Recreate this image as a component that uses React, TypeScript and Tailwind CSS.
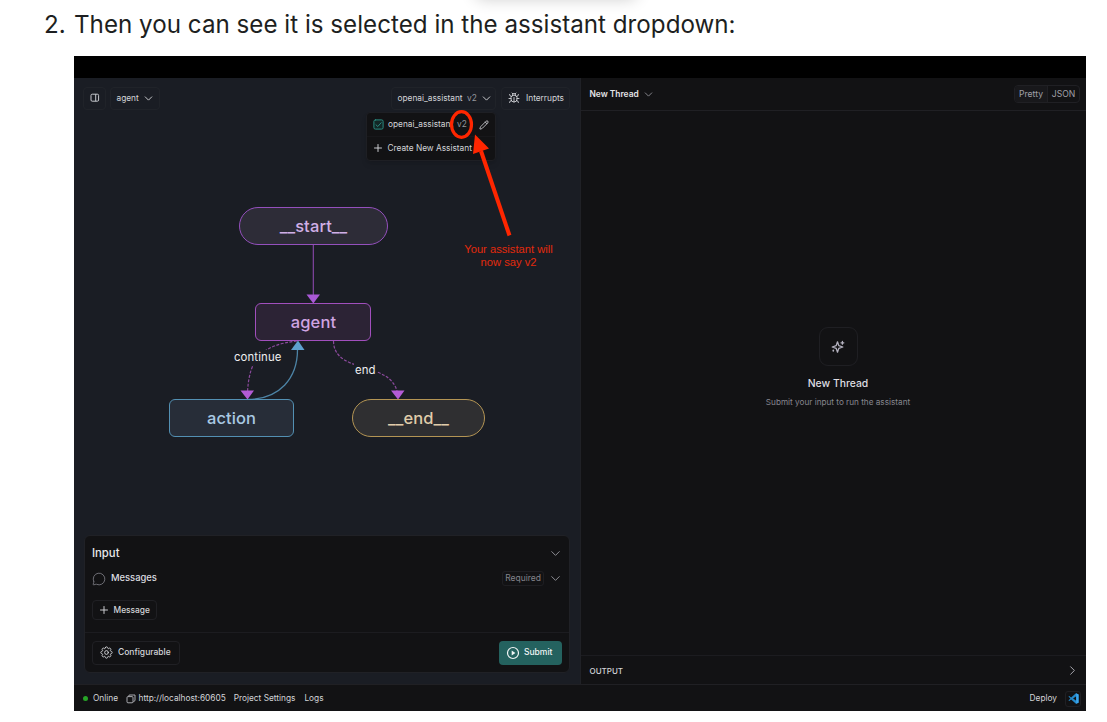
import React from "react";
import { Bug, ChevronDown, ChevronRight, MessageCircle, Pencil, Plus } from "lucide-react";
import { HiOutlineCog8Tooth } from "react-icons/hi2";

const btn = "flex shrink-0 items-center rounded-[4px] border border-[#202329]";

function PanelIcon() {
  return (
    <svg width="10" height="10" viewBox="0 0 10 10" fill="none" stroke="#c6c8cd" strokeWidth="1">
      <rect x="1" y="1.2" width="7.6" height="7" rx="1.2" />
      <path d="M5.7 1.2v7" />
    </svg>
  );
}

function CheckIcon() {
  return (
    <svg className="shrink-0" width="11" height="11" viewBox="0 0 11 11" fill="none" stroke="#2b8a80" strokeWidth="1" strokeLinecap="round" strokeLinejoin="round">
      <rect x="0.900" y="0.900" width="9.200" height="9.200" rx="1.500" fill="#122625" />
      <path d="M3 5.800 4.800 7.500 8.200 3.700" />
    </svg>
  );
}

function PlayIcon() {
  return (
    <svg width="14" height="14" viewBox="0 0 14 14" fill="none">
      <circle cx="7" cy="7" r="5.500" stroke="#f1f5f5" strokeWidth="1.200" />
      <path d="M5.700 4.600v4.800L9.400 7Z" fill="#f1f5f5" />
    </svg>
  );
}

function CopyIcon() {
  return (
    <svg width="10" height="10" viewBox="0 0 10 10" fill="none" stroke="#b9babf" strokeWidth="0.9">
      <rect x="1" y="2.6" width="6" height="6.2" rx="1" />
      <path d="M2.600 2.400 3.200 1H9v5.600L7.300 7.800" />
    </svg>
  );
}

function SparkleIcon() {
  return (
    <svg width="16" height="16" viewBox="0 0 16 16" fill="none" stroke="#b4b2bf" strokeWidth="1.3" strokeLinejoin="round" strokeLinecap="round">
      <path d="M7.5 2.8 8.8 6.6 12.8 8 8.8 9.4 7.5 13.2 6.2 9.4 2.2 8 6.2 6.6Z" />
      <path d="M12.4 2.4v2.8M11 3.8h2.8" />
      <path d="M3.3 11.3v.5" strokeWidth="1.7" />
    </svg>
  );
}

function VSCodeIcon() {
  return (
    <svg width="11" height="11" viewBox="0 0 24 24">
      <path fill="#2489ca" d="M17.3.4 6.8 10 2.6 6.8 1 7.7l4.200 4.300L1 16.300l1.6.9L6.8 14l10.5 9.6L23 21V3ZM18 7v10l-6.9-5Z" />
      <path fill="#3ba6ee" d="M17.3.4 23 3v18l-5.7 2.6.7-2.2V2.5Z" />
    </svg>
  );
}

function Graph() {
  const node = "absolute flex h-[38px] items-center justify-center border text-[16.500px] font-medium";
  return (
    <div className="absolute inset-0 tracking-[0.1px]">
      <svg className="absolute inset-0" width="506" height="460" viewBox="74 78 506 460" fill="none">
        <path d="M313.300 244v52" stroke="#8b49ad" strokeWidth="1.1" />
        <path d="M306.500 294.500h13.500l-6.700 9z" fill="#a959d6" />
        <path d="M297 341C264 345 249 356 247.500 393" stroke="#8c4a9d" strokeWidth="1.200" strokeDasharray="3 1.500" />
        <path d="M333.500 341C334 375 391 360 397.500 393" stroke="#8c4a9d" strokeWidth="1.200" strokeDasharray="3 1.500" />
        <path d="M248 399.500C279 399 298 379 297.500 348" stroke="#4d84a6" strokeWidth="1.300" />
        <path d="M240.500 390.500h13.500l-6.500 9zM391 390.500h13.500l-6.500 9z" fill="#b35bd5" />
      </svg>
      <div className={node + " left-[165px] top-[129px] w-[149px] rounded-full border-[#9450bd] bg-[#2d2c37] text-[#d0afe6]"}>__start__</div>
      <div className={node + " left-[181px] top-[225px] w-[116px] rounded-[6px] border-[#a14fbd] bg-[#2c2335] pl-[1px] text-[#d0a4e2]"}>agent</div>
      <div className={node + " left-[95px] top-[321px] w-[125px] rounded-[6px] border-[#5390b3] bg-[#272d38] pt-[1px] text-[#a9c9e3]"}>action</div>
      <div className={node + " left-[278px] top-[321px] w-[133px] rounded-full border-[#b49554] bg-[#2f2f31] pt-[1px] text-[#e0cdaa]"}>__end__</div>
      <svg className="absolute inset-0" width="506" height="460" viewBox="74 78 506 460">
        <path d="M291 350h13.500l-6.500-9.500z" fill="#5ea1ce" />
      </svg>
      <div className="absolute left-[158px] top-[272px] bg-[#1a1d24] px-[2px] text-[11.400px] leading-[15px] text-[#eeeef0]">continue</div>
      <div className="absolute left-[280px] top-[285px] bg-[#1a1d24] px-[1px] text-[11.400px] leading-[15px] text-[#eeeef0]">end</div>
    </div>
  );
}

function AssistantMenu() {
  return (
    <div className="absolute right-0 top-[25px] z-10 h-[49px] w-[130px] rounded-[4px] border border-[#1e1f24] bg-[#121214] shadow-md">
      <div className="flex h-[24px] items-center border-b border-[#17171a] pl-[6px] pr-[6px] pt-px">
        <CheckIcon />
        <span className="ml-[4px] w-[65px] shrink-0 whitespace-nowrap">openai_assistant</span>
        <span className="ml-[4px] text-[#96979d]">v2</span>
        <Pencil className="ml-auto" size={10} strokeWidth={2} />
      </div>
      <div className="flex h-[23px] items-center pl-[5px]">
        <Plus size={12} strokeWidth={1.900} />
        <span className="ml-[3.500px] whitespace-nowrap pt-px">Create New Assistant</span>
      </div>
    </div>
  );
}

function InputCard() {
  return (
    <section className="relative mx-[10px] mb-[11px] flex h-[138px] flex-col rounded-[6px] border border-[#202126] bg-[#121214] font-medium">
      <div className="flex h-[33px] items-center justify-between pl-[7px] pr-[6px] pt-px text-[11.300px] text-[#e8e8ea]">
        Input
        <ChevronDown size={15} strokeWidth={1.500} color="#94949b" />
      </div>
      <div className="flex h-[19px] items-center pl-[7px] pr-[6px]">
        <MessageCircle size={14} strokeWidth={1.500} color="#797981" />
        <span className="ml-[5px] text-[9.400px] text-[#dedee1]">Messages</span>
        <span className="ml-auto flex h-[15px] items-center rounded-[3px] border border-[#1e1e22] px-[2px] text-[8.500px] font-normal text-[#84848c]">Required</span>
        <ChevronDown className="ml-[4px]" size={15} strokeWidth={1.500} color="#94949b" />
      </div>
      <div className="h-[45px] border-b border-[#1c1c20] pl-[7px] pt-[12px]">
        <button className="flex h-[20px] w-[65px] items-center rounded-[4px] border border-[#202024] pl-[5px] text-[8.400px]">
          <Plus size={12} strokeWidth={1.900} />
          <span className="ml-[3.500px]">Message</span>
        </button>
      </div>
      <div className="flex flex-1 items-center justify-between pl-[7px] pr-[7px]">
        <button className="flex h-[24px] w-[88px] items-center rounded-[4px] border border-[#202024] pl-[6px] text-[8.500px]">
          <HiOutlineCog8Tooth size={15} />
          <span className="ml-[4px]">Configurable</span>
        </button>
        <button className="flex h-[24px] w-[63px] items-center rounded-[4px] bg-[#24625f] pl-[7px] text-[8.500px] text-[#f1f5f5]">
          <PlayIcon />
          <span className="ml-[4px]">Submit</span>
        </button>
      </div>
    </section>
  );
}

function GraphPanel() {
  return (
    <div className="relative flex w-[506px] flex-col justify-between bg-[#1a1d24]">
      <Graph />
      <header className="relative flex h-[40px] items-center pl-[9px] pr-[10px]">
        <button className={btn + " h-[23px] w-[23px] justify-center"}><PanelIcon /></button>
        <button className={btn + " ml-[4px] h-[23px] w-[50px] pl-[5.500px]"}>
          <span className="pt-px">agent</span>
          <ChevronDown className="ml-[3px]" size={13} strokeWidth={1.700} />
        </button>
        <div className="relative ml-auto">
          <button className={btn + " h-[23px] w-[105px] pl-[5.500px]"}>
            <span className="pt-px">openai_assistant</span>
            <span className="ml-[4.500px] pt-px text-[#96979d]">v2</span>
            <ChevronDown className="ml-[3px]" size={13} strokeWidth={1.700} />
          </button>
          <AssistantMenu />
        </div>
        <button className={btn + " ml-[5px] h-[23px] w-[69px] pl-[6px]"}>
          <Bug size={12} strokeWidth={1.800} />
          <span className="ml-[6px] pt-px">Interrupts</span>
        </button>
      </header>
      <InputCard />
    </div>
  );
}

function ThreadPanel() {
  return (
    <div className="flex flex-1 flex-col border-l border-[#202126] bg-[#121214]">
      <header className="flex h-[33px] items-center justify-between border-b border-[#202024] pl-[8.500px] pr-[6px]">
        <button className="flex items-center text-[8.400px] font-semibold text-[#e4e4e7]">
          New Thread
          <ChevronDown className="ml-[3px]" size={13} strokeWidth={1.600} color="#94949b" />
        </button>
        <div className="flex h-[18px] w-[66px] overflow-hidden rounded-[4px] border border-[#202024] text-[8.600px] text-[#a0a0a8]">
          <span className="flex w-[33px] items-center justify-center border-r border-[#202024] bg-[#18181b]">Pretty</span>
          <span className="flex flex-1 items-center justify-center">JSON</span>
        </div>
      </header>
      <main className="flex flex-1 flex-col items-center pl-[9px] pt-[216px]">
        <div className="flex size-[39px] items-center justify-center rounded-[9px] border border-[#1f1f23]"><SparkleIcon /></div>
        <h2 className="mt-[10px] text-[10.400px] font-medium leading-[15px] text-[#dedee2]">New Thread</h2>
        <p className="mt-[5px] text-[8.200px] leading-[13px] text-[#86868f]">Submit your input to run the assistant</p>
      </main>
      <div className="flex h-[29px] items-center justify-between border-t border-[#1c1c20] pl-[8.500px] pr-[6px] text-[8px] font-medium">
        <span className="pt-px">OUTPUT</span>
        <ChevronRight size={15} strokeWidth={1.600} color="#a6a6ad" />
      </div>
    </div>
  );
}

function Annotation() {
  return (
    <>
      <svg className="absolute left-[366px] top-[22px] z-20" width="100" height="170" viewBox="440 78 100 170">
        <ellipse cx="461.500" cy="124.500" rx="10" ry="12.800" fill="none" stroke="#ff2600" strokeWidth="3.200" />
        <path d="M509.500 235.500 481 151" stroke="#ff2600" strokeWidth="4" />
        <path d="M475 134.500 489 148.500 473 154Z" fill="#ff2600" />
      </svg>
      <p className="absolute left-[374.500px] top-[187px] w-[120px] whitespace-nowrap text-center font-['Liberation_Sans',Arial,sans-serif] text-[11.200px] leading-[13px] text-[#e32a0c]">
        Your assistant will<br />now say v2
      </p>
    </>
  );
}

export default function App() {
  return (
    <div className="relative h-[722px] w-[1107px] overflow-hidden bg-white font-['Inter',sans-serif]">
      <div className="absolute left-[474px] top-[-23px] h-[20px] w-[164px] rounded-full shadow-[0_2px_16px_rgba(0,0,0,0.2)]" />
      <div className="flex h-[56px] pl-[44px] text-[24.200px] leading-[50px] text-[#1d1f21]">
        <span className="w-[30px] shrink-0">2.</span>
        <p className="whitespace-nowrap">Then you can see it is selected in the assistant dropdown:</p>
      </div>
      <div className="relative ml-[74px] flex h-[655px] w-[1012px] flex-col bg-black pt-[22px] text-[8.300px] text-[#d3d4d8]">
        <div className="flex flex-1">
          <GraphPanel />
          <ThreadPanel />
        </div>
        <footer className="flex h-[27px] items-center border-t border-[#202024] bg-[#121214] pl-[9px] pr-[5px] pt-px">
          <span className="size-[5px] rounded-full bg-[#27a527]" />
          <span className="ml-[5px]">Online</span>
          <span className="ml-[7.500px]"><CopyIcon /></span>
          <span className="ml-[3px]">http://localhost:60605</span>
          <span className="ml-[8px]">Project Settings</span>
          <span className="ml-[9px]">Logs</span>
          <span className="ml-auto">Deploy</span>
          <span className="ml-[8px] flex size-[16px] items-center justify-center rounded-[3px] border border-[#202024]"><VSCodeIcon /></span>
        </footer>
        <Annotation />
      </div>
    </div>
  );
}
